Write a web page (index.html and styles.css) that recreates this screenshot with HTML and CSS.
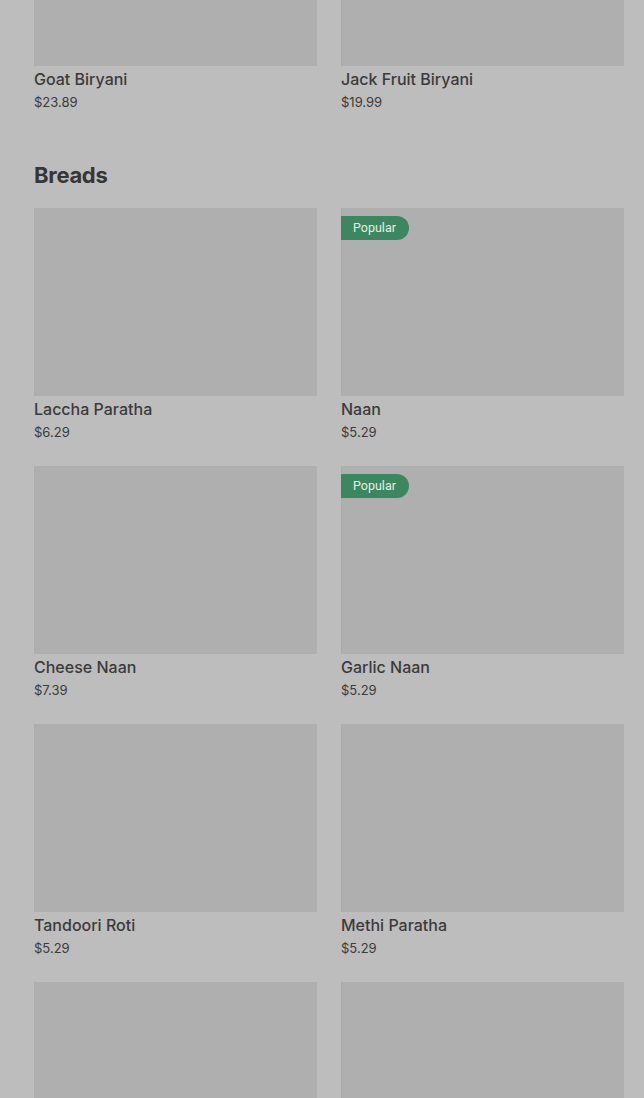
FILE: index.html
```html
<!DOCTYPE html>
<html>
<head>
<meta charset="utf-8">
<link rel="stylesheet" href="styles.css">
</head>
<body>
<div class="page">
  <section class="section section-first">
    <div class="grid">
      <div class="card"><div class="img"></div><div class="name">Goat Biryani</div><div class="price">$23.89</div></div>
      <div class="card"><div class="img"></div><div class="name">Jack Fruit Biryani</div><div class="price">$19.99</div></div>
    </div>
  </section>
  <section class="section">
    <h2 class="heading">Breads</h2>
    <div class="grid">
      <div class="card"><div class="img"></div><div class="name">Laccha Paratha</div><div class="price">$6.29</div></div>
      <div class="card"><div class="img"><span class="badge">Popular</span></div><div class="name">Naan</div><div class="price">$5.29</div></div>
      <div class="card"><div class="img"></div><div class="name">Cheese Naan</div><div class="price">$7.39</div></div>
      <div class="card"><div class="img"><span class="badge">Popular</span></div><div class="name">Garlic Naan</div><div class="price">$5.29</div></div>
      <div class="card"><div class="img"></div><div class="name">Tandoori Roti</div><div class="price">$5.29</div></div>
      <div class="card"><div class="img"></div><div class="name">Methi Paratha</div><div class="price">$5.29</div></div>
      <div class="card"><div class="img"></div><div class="name">&nbsp;</div><div class="price">&nbsp;</div></div>
      <div class="card"><div class="img"></div><div class="name">&nbsp;</div><div class="price">&nbsp;</div></div>
    </div>
  </section>
</div>
</body>
</html>
```
FILE: styles.css
```css
html, body {
  margin: 0;
  padding: 0;
  background: #bdbdbd;
  overflow: hidden;
}
body {
  font-family: "Inter", "Roboto", "Liberation Sans", sans-serif;
  color: #3a3a3a;
}
.page {
  padding: 0 20px 0 34px;
  margin-top: -122px;
}
.grid {
  display: grid;
  grid-template-columns: 1fr 1fr;
  column-gap: 24px;
  row-gap: 24px;
}
.card {
  display: flex;
  flex-direction: column;
}
.img {
  position: relative;
  height: 188px;
  background: #afafaf;
  box-shadow: inset 1px 0 0 #ababab;
}
.name {
  font-size: 16px;
  line-height: 24px;
  font-weight: 500;
  margin-top: 1px;
  color: #3b3b3b;
}
.price {
  font-size: 13px;
  line-height: 20px;
  margin-top: 1px;
  color: #3b3b3b;
}
.heading {
  margin: 49px 0 19px;
  font-size: 22px;
  line-height: 28px;
  font-weight: 700;
  color: #363636;
  letter-spacing: -0.3px;
}
.badge {
  position: absolute;
  left: 0;
  top: 8px;
  height: 24px;
  line-height: 24px;
  padding: 0 13px 0 12px;
  background: #3d8760;
  color: #e6ede8;
  font-size: 12.5px;
  border-radius: 0 12px 12px 0;
  font-family: "Roboto", "Liberation Sans", sans-serif;
}
```
